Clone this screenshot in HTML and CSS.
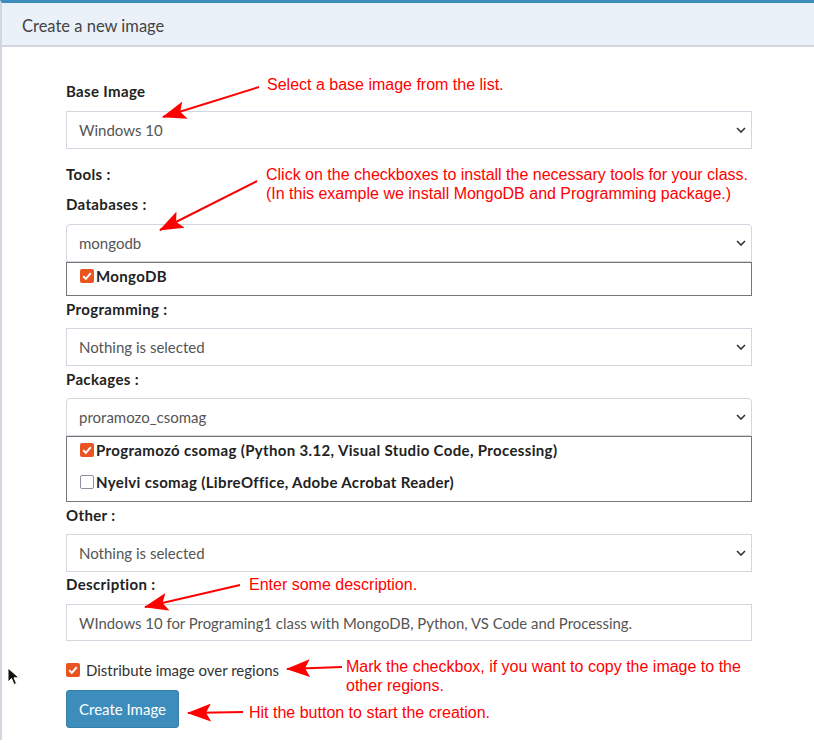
FILE: index.html
```html
<!DOCTYPE html>
<html>
<head>
<meta charset="utf-8">
<link rel="stylesheet" href="styles.css">
</head>
<body>
<div class="page">
  <div class="box">
    <div class="box-header"><h3 class="box-title">Create a new image</h3></div>
    <div class="box-body">
      <label class="lbl">Base Image</label>
      <div class="sel">Windows 10<svg class="chev" width="10" height="6" viewBox="0 0 10 6"><path d="M1 1 L5 5 L9 1" fill="none" stroke="#333" stroke-width="1.6"/></svg></div>

      <label class="lbl tools">Tools :</label>
      <label class="lbl">Databases :</label>
      <div class="sel open">mongodb<svg class="chev" width="10" height="6" viewBox="0 0 10 6"><path d="M1 1 L5 5 L9 1" fill="none" stroke="#333" stroke-width="1.6"/></svg></div>
      <div class="drop">
        <div class="item"><span class="cb on"><svg width="14" height="14" viewBox="0 0 14 14"><path d="M3.2 7.2 L5.8 9.8 L10.8 4.2" fill="none" stroke="#fff" stroke-width="2"/></svg></span>MongoDB</div>
      </div>

      <label class="lbl gap3">Programming :</label>
      <div class="sel">Nothing is selected<svg class="chev" width="10" height="6" viewBox="0 0 10 6"><path d="M1 1 L5 5 L9 1" fill="none" stroke="#333" stroke-width="1.6"/></svg></div>

      <label class="lbl gap3">Packages :</label>
      <div class="sel open">proramozo_csomag<svg class="chev" width="10" height="6" viewBox="0 0 10 6"><path d="M1 1 L5 5 L9 1" fill="none" stroke="#333" stroke-width="1.6"/></svg></div>
      <div class="drop">
        <div class="item"><span class="cb on"><svg width="14" height="14" viewBox="0 0 14 14"><path d="M3.2 7.2 L5.8 9.8 L10.8 4.2" fill="none" stroke="#fff" stroke-width="2"/></svg></span>Programozó csomag (Python 3.12, Visual Studio Code, Processing)</div>
        <div class="item"><span class="cb"></span>Nyelvi csomag (LibreOffice, Adobe Acrobat Reader)</div>
      </div>

      <label class="lbl gap5">Other :</label>
      <div class="sel">Nothing is selected<svg class="chev" width="10" height="6" viewBox="0 0 10 6"><path d="M1 1 L5 5 L9 1" fill="none" stroke="#333" stroke-width="1.6"/></svg></div>

      <label class="lbl gap2">Description :</label>
      <div class="inp">WIndows 10 for Programing1 class with MongoDB, Python, VS Code and Processing.</div>

      <div class="dist"><span class="cb on"><svg width="14" height="14" viewBox="0 0 14 14"><path d="M3.2 7.2 L5.8 9.8 L10.8 4.2" fill="none" stroke="#fff" stroke-width="2"/></svg></span>Distribute image over regions</div>

      <button class="btn">Create Image</button>
    </div>
  </div>

  <svg class="arrows" width="814" height="743" viewBox="0 0 814 743">
    <defs>
      <marker id="ah" viewBox="0 0 24 18" refX="23" refY="9" markerWidth="24" markerHeight="18" markerUnits="userSpaceOnUse" orient="auto">
        <path d="M0 0 L24 9 L0 18 L5 9 Z" fill="#ff0000"/>
      </marker>
    </defs>
    <g stroke="#ff0000" stroke-width="2" fill="none">
      <line x1="259" y1="87" x2="163" y2="117" marker-end="url(#ah)"/>
      <line x1="257" y1="181" x2="160" y2="230" marker-end="url(#ah)"/>
      <line x1="240" y1="585" x2="145" y2="607" marker-end="url(#ah)"/>
      <line x1="342" y1="667" x2="287" y2="669" marker-end="url(#ah)"/>
      <line x1="243" y1="712" x2="188" y2="713" marker-end="url(#ah)"/>
    </g>
  </svg>

  <div class="note n1">Select a base image from the list.</div>
  <div class="note n2">Click on the checkboxes to install the necessary tools for your class.<br>(In this example we install MongoDB and Programming package.)</div>
  <div class="note n3">Enter some description.</div>
  <div class="note n4">Mark the checkbox, if you want to copy the image to the<br>other regions.</div>
  <div class="note n5">Hit the button to start the creation.</div>

  <svg class="cursor" width="14" height="20" viewBox="0 0 14 20">
    <path d="M1 1 L1 15 L4.5 11.5 L7 17.5 L9.5 16.5 L7 10.8 L12 10.8 Z" fill="#111" stroke="#fff" stroke-width="1"/>
  </svg>
</div>
</body>
</html>
```

FILE: styles.css
```css
html, body {
  margin: 0;
  padding: 0;
  background: #fff;
}
.page {
  position: relative;
  width: 814px;
  height: 743px;
  overflow: hidden;
  font-family: Lato, "Source Sans Pro", "Liberation Sans", sans-serif;
  color: #333;
}
.box {
  border-top: 3px solid #3c8dbc;
  border-left: 2px solid #d2d6de;
  height: 740px;
  box-sizing: border-box;
}
.box-header {
  background: #eaf1f8;
  border-bottom: 2px solid #d2d6de;
  height: 44px;
  box-sizing: border-box;
  display: flex;
  align-items: center;
  padding: 4px 0 0 20px;
}
.box-title {
  margin: 0;
  font-size: 16.5px;
  font-weight: 400;
  color: #444;
}
.box-body {
  padding: 34px 62px 0 64px;
  display: flex;
  flex-direction: column;
  align-items: stretch;
}
.lbl {
  display: block;
  font-size: 15px;
  font-weight: 700;
  letter-spacing: 0.35px;
  line-height: 20px;
  margin-bottom: 10px;
  color: #222;
}
.tools { margin-top: 15px; }
.gap3 { margin-top: 3px; margin-bottom: 9px; }
.gap5 { margin-top: 3px; margin-bottom: 9px; }
.gap2 { margin-top: 2px; margin-bottom: 10px; }
.sel, .inp {
  height: 38px;
  box-sizing: border-box;
  border: 1px solid #d2d6de;
  padding: 0 12px;
  display: flex;
  align-items: center;
  justify-content: space-between;
  font-size: 15px;
  color: #555;
}
.sel.open { border-radius: 4px 4px 0 0; }
.inp { height: 37px; font-size: 14.9px; }
.chev { margin-right: -7px; }
.drop {
  border: 1px solid #777;
  padding: 0 0 6px 13px;
  display: flex;
  flex-direction: column;
  gap: 6px;
}
.item {
  height: 26px;
  display: flex;
  align-items: center;
  font-size: 15px;
  font-weight: 700;
  letter-spacing: 0.35px;
  color: #222;
}
.cb {
  width: 14px;
  height: 14px;
  box-sizing: border-box;
  border: 1.5px solid #8f8f9d;
  border-radius: 2px;
  margin-right: 2px;
  display: inline-flex;
  align-items: center;
  justify-content: center;
  flex: none;
}
.cb.on {
  background: #e95420;
  border: none;
}
.dist {
  margin-top: 19px;
  height: 20px;
  display: flex;
  align-items: center;
  font-size: 15px;
  color: #333;
}
.dist .cb { margin-right: 6px; }
.btn {
  margin-top: 10px;
  align-self: flex-start;
  width: 113px;
  height: 38px;
  background: #3c8dbc;
  border: 1px solid #367fa9;
  border-radius: 3px;
  color: #fff;
  font-family: inherit;
  font-size: 15px;
  padding: 0;
}
.arrows {
  position: absolute;
  left: 0;
  top: 0;
}
.note {
  position: absolute;
  font-family: "Liberation Sans", Arial, sans-serif;
  font-size: 16px;
  line-height: 19px;
  color: #ff0000;
  white-space: nowrap;
}
.n1 { left: 267px; top: 75px; }
.n2 { left: 266px; top: 165px; }
.n3 { left: 249px; top: 575px; }
.n4 { left: 346px; top: 657px; }
.n5 { left: 249px; top: 703px; }
.cursor {
  position: absolute;
  left: 7px;
  top: 667px;
}
```
